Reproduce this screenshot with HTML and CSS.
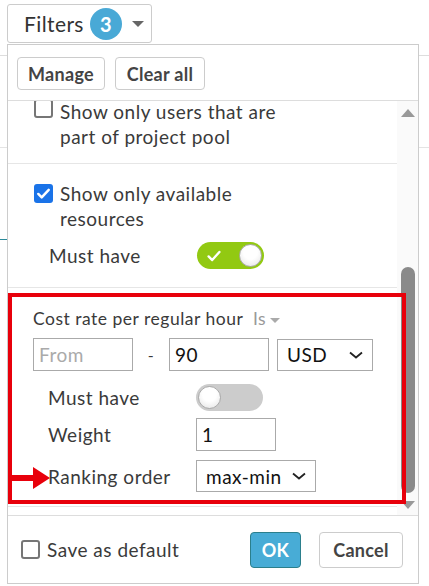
FILE: index.html
```html
<!DOCTYPE html>
<html>
<head>
  <meta charset="utf-8">
  <title>Filters</title>
  <link rel="stylesheet" href="styles.css">
</head>
<body>
  <div class="page">
    <div class="toolbar">
      <button type="button" class="filters-btn">Filters <span class="badge">3</span><span class="caret"></span></button>
    </div>
    <div class="backdrop">
      <div class="bg-row"></div>
      <div class="bg-row teal"></div>
    </div>

    <div class="dropdown">
      <div class="dd-head">
        <button type="button" class="btn">Manage</button>
        <button type="button" class="btn">Clear all</button>
      </div>
      <div class="dd-body">
        <div class="dd-scroll">
          <div class="section first">
            <label class="check-row"><span class="box"></span><span class="check-text">Show only users that are part of project pool</span></label>
          </div>
          <div class="section">
            <label class="check-row"><span class="box checked"><svg viewBox="0 0 20 20" width="20" height="20"><path d="M4.5 10.5l3.6 3.6 7.4-8" fill="none" stroke="#fff" stroke-width="2.6" stroke-linecap="round" stroke-linejoin="round"/></svg></span><span class="check-text">Show only available resources</span></label>
            <div class="field-row">
              <span class="field-label">Must have</span>
              <span class="toggle on"><svg viewBox="0 0 20 20" width="18" height="18"><path d="M4 10.5l4 4 8-9" fill="none" stroke="#fff" stroke-width="2.6" stroke-linecap="round" stroke-linejoin="round"/></svg><span class="knob"></span></span>
            </div>
          </div>
          <div class="section cost">
            <div class="cost-title">Cost rate per regular hour <span class="is">Is<span class="mini-caret"></span></span></div>
            <div class="range-row">
              <span class="input placeholder">From</span>
              <span class="dash">-</span>
              <span class="input">90</span>
              <span class="select usd">USD<svg viewBox="0 0 16 10" width="16" height="10"><path d="M2 2.5l6 5 6-5" fill="none" stroke="#222" stroke-width="1.8"/></svg></span>
            </div>
            <div class="field-row">
              <span class="field-label">Must have</span>
              <span class="toggle"><span class="knob"></span></span>
            </div>
            <div class="field-row weight-row">
              <span class="field-label">Weight</span>
              <span class="input weight">1</span>
            </div>
            <div class="field-row ranking-row">
              <span class="field-label">Ranking order</span>
              <span class="select ranking">max-min<svg viewBox="0 0 16 10" width="16" height="10"><path d="M2 2.5l6 5 6-5" fill="none" stroke="#222" stroke-width="1.8"/></svg></span>
            </div>
          </div>
        </div>
        <div class="scrollbar">
          <span class="arrow up"></span>
          <div class="track"><div class="thumb"></div></div>
          <span class="arrow down"></span>
        </div>
        <!-- annotation overlay -->
        <div class="highlight"></div>
        <svg class="pointer" viewBox="0 0 40 24" width="40" height="24"><path d="M0 9h22V1l17 11-17 11v-8H0z" fill="#e8000b"/></svg>
      </div>
      <div class="dd-foot">
        <label class="check-row small"><span class="box"></span><span>Save as default</span></label>
        <div class="actions">
          <button type="button" class="btn ok">OK</button>
          <button type="button" class="btn cancel">Cancel</button>
        </div>
      </div>
    </div>
  </div>
</body>
</html>
```

FILE: styles.css
```css
* {
  box-sizing: border-box;
}
body {
  margin: 0;
  font-family: Lato, "Open Sans", sans-serif;
  letter-spacing: 0.5px;
  color: #3a3a3a;
  background: #fff;
}
.page {
  position: relative;
  width: 429px;
  height: 586px;
  overflow: hidden;
}
.toolbar {
  padding: 4px 7px 0;
}
.filters-btn {
  display: flex;
  align-items: center;
  height: 39px;
  width: 145px;
  padding: 0 0 0 16px;
  border: 1px solid #ccc;
  border-radius: 3px;
  background: #fff;
  font-family: inherit;
  font-size: 21px;
  letter-spacing: 0.4px;
  color: #333;
}
.badge {
  display: inline-flex;
  align-items: center;
  justify-content: center;
  width: 32px;
  height: 32px;
  margin-left: 6px;
  border-radius: 50%;
  background: #49a9d6;
  color: #fff;
  font-weight: bold;
  font-size: 20px;
}
.caret {
  margin-left: 10px;
  border-left: 6px solid transparent;
  border-right: 6px solid transparent;
  border-top: 6px solid #666;
}
.backdrop {
  border-top: 1px solid #ddd;
  margin-top: 12px;
}
.bg-row {
  height: 92px;
  border-bottom: 1px solid #e4e4e4;
}
.bg-row.teal {
  border-bottom: 1px solid #2a8a9a;
  width: 20px;
}

.dropdown {
  position: absolute;
  left: 7px;
  top: 44px;
  width: 412px;
  height: 540px;
  background: #fff;
  border: 1px solid #ccc;
  display: flex;
  flex-direction: column;
}
.dd-head {
  display: flex;
  gap: 10px;
  padding: 12px 9px 10px;
  border-bottom: 1px solid #ddd;
}
.btn {
  height: 33px;
  padding: 0 10px;
  border: 1px solid #ccc;
  border-radius: 4px;
  background: #fff;
  font-family: inherit;
  font-size: 18px;
  font-weight: bold;
  letter-spacing: 0.3px;
  color: #444;
}
.dd-head .btn:first-child {
  width: 88px;
}
.dd-head .btn:last-child {
  width: 90px;
}
.dd-body {
  position: relative;
  flex: 1;
  display: flex;
  overflow: hidden;
}
.dd-scroll {
  flex: 1;
  overflow: hidden;
}
.section {
  padding: 17px 0 18px 26px;
  border-bottom: 1px solid #e6e6e6;
}
.section.first {
  padding-top: 0;
  padding-bottom: 14px;
}
.section.first .check-row {
  line-height: 23px;
}
.section.first .check-text {
  line-height: 25px;
  margin-top: -2px;
}
.section.first .box {
  margin-top: -2px;
}
.check-row {
  display: flex;
  gap: 7px;
  font-size: 19px;
  line-height: 25px;
}
.check-text {
  max-width: 236px;
}
.box {
  flex: none;
  width: 19px;
  height: 19px;
  margin-top: 3px;
  border: 2px solid #767676;
  border-radius: 3px;
  background: #fff;
}
.box.checked {
  border: none;
  background: #1a73e8;
}
.box svg {
  display: block;
  width: 19px;
  height: 19px;
}
.field-row {
  display: flex;
  align-items: center;
  padding-left: 15px;
  margin-top: 11px;
}
.field-label {
  width: 148px;
  font-size: 19px;
}
.toggle {
  position: relative;
  display: flex;
  align-items: center;
  width: 67px;
  height: 27px;
  padding: 0 4px 0 8px;
  border-radius: 14px;
  background: #ccc;
}
.toggle.on {
  background: #92c912;
}
.knob {
  position: absolute;
  top: 2px;
  left: 2px;
  width: 23px;
  height: 23px;
  border-radius: 50%;
  border: 1px solid #aaa;
  background: radial-gradient(circle at 50% 35%, #fff 40%, #e2e2e2 100%);
}
.toggle.on .knob {
  left: auto;
  right: 2px;
}
.cost {
  padding: 20px 0 14px 25px;
}
.cost-title {
  font-size: 17.5px;
  margin-bottom: 9px;
}
.is {
  color: #999;
  margin-left: 5px;
}
.mini-caret {
  display: inline-block;
  margin-left: 4px;
  vertical-align: middle;
  border-left: 5px solid transparent;
  border-right: 5px solid transparent;
  border-top: 5px solid #aaa;
}
.range-row {
  display: flex;
  align-items: center;
}
.input,
.select {
  display: flex;
  align-items: center;
  height: 33px;
  padding: 0 5px;
  border: 1px solid #aaa;
  font-size: 19px;
  color: #111;
  background: #fff;
}
.range-row .input {
  width: 100px;
}
.placeholder {
  color: #aaa;
}
.dash {
  width: 36px;
  text-align: center;
}
.select {
  justify-content: space-between;
  gap: 8px;
  padding: 0 8px 0 9px;
  height: 32px;
}
.usd {
  width: 96px;
  margin-left: 8px;
}
.range-row + .field-row {
  margin-top: 13px;
}
.weight-row {
  margin-top: 7px;
}
.ranking-row {
  margin-top: 9px;
}
.weight {
  width: 80px;
  height: 33px;
}
.ranking {
  width: 120px;
}
.scrollbar {
  width: 21px;
  display: flex;
  flex-direction: column;
  align-items: center;
  background: #fafafa;
  padding: 8px 0 6px;
}
.arrow {
  border-left: 7px solid transparent;
  border-right: 7px solid transparent;
}
.arrow.up {
  border-bottom: 8px solid #999;
}
.arrow.down {
  border-top: 8px solid #999;
}
.track {
  flex: 1;
  width: 14px;
  padding: 150px 0 8px;
}
.thumb {
  height: 100%;
  border-radius: 7px;
  background: #8a8a8a;
}
.highlight {
  position: absolute;
  left: 0;
  top: 192px;
  width: 398px;
  height: 211px;
  border: 4px solid #e8000b;
}
.pointer {
  position: absolute;
  left: 3px;
  top: 365px;
}
.dd-foot {
  display: flex;
  align-items: center;
  justify-content: space-between;
  height: 68px;
  padding: 0 15px 0 13px;
  border-top: 1px solid #ddd;
}
.check-row.small {
  font-size: 19px;
  gap: 7px;
}
.actions {
  display: flex;
  gap: 18px;
}
.ok {
  width: 51px;
  height: 36px;
  padding: 0;
  background: #48acd6;
  border-color: #2b7f8c;
  color: #fff;
}
.cancel {
  width: 84px;
  height: 36px;
  color: #444;
}
```
